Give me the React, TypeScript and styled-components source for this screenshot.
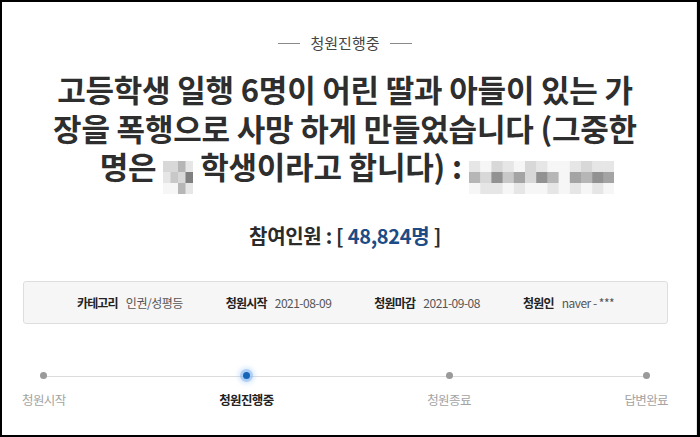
import React from "react";
import styled, { createGlobalStyle } from "styled-components";

const GlobalStyle = createGlobalStyle`
  html, body { margin: 0; padding: 0; background: #fff; }
  body { font-family: "Noto Sans CJK KR", "Noto Sans", sans-serif; }
`;

const Frame = styled.div`
  width: 700px;
  height: 437px;
  box-sizing: border-box;
  border-style: solid;
  border-color: #000;
  border-width: 2px 3px 2px 2px;
  background: #fff;
  overflow: hidden;
`;

const Inner = styled.div`
  height: 100%;
  box-sizing: border-box;
  border-right: 1px solid #e6e6e6;
  padding: 31px 0 0 20px;
`;

const Content = styled.div`
  width: 646px;
  display: flex;
  flex-direction: column;
  align-items: center;
`;

const Status = styled.div`
  display: flex;
  align-items: center;
  gap: 10px;
  font-size: 15px;
  line-height: 20px;
  color: #444;
  &::before, &::after {
    content: "";
    width: 22px;
    height: 1px;
    background: #8a8a8a;
  }
`;

const Title = styled.h1`
  margin: 17px 0 0;
  font-size: 31px;
  font-weight: 700;
  color: #2e2e2e;
  text-align: center;
  letter-spacing: -0.2px;
`;

const TitleLine = styled.span<{ $shift?: number }>`
  display: block;
  height: 38.5px;
  line-height: 38.5px;
  white-space: nowrap;
  padding-left: ${(p) => p.$shift ?? 0}px;
`;

const MosaicSvg = styled.svg`
  display: inline-block;
  vertical-align: -15px;
`;

const Count = styled.div`
  margin-top: 37px;
  font-size: 20px;
  line-height: 26px;
  font-weight: 700;
  color: #2b2b2b;
  letter-spacing: -0.3px;
`;

const Num = styled.span`
  color: #1c4b86;
`;

const InfoBox = styled.div`
  margin-top: 32px;
  align-self: stretch;
  margin-left: 1px;
  height: 43px;
  box-sizing: border-box;
  border: 1px solid #dedede;
  border-radius: 3px;
  background: #f6f6f6;
  display: flex;
  justify-content: center;
  align-items: center;
  gap: 43px;
`;

const InfoItem = styled.div`
  display: flex;
  align-items: center;
  gap: 8px;
  font-size: 12px;
`;

const InfoLabel = styled.span`
  font-weight: 700;
  color: #222;
  letter-spacing: -0.8px;
`;

const InfoValue = styled.span`
  color: #555;
  letter-spacing: -0.5px;
`;

const Steps = styled.div`
  margin-top: 44px;
  align-self: stretch;
  position: relative;
  display: flex;
  justify-content: space-between;
  &::before {
    content: "";
    position: absolute;
    left: 21px;
    right: 20px;
    top: 8px;
    height: 1px;
    background: #dcdcdc;
  }
`;

const Step = styled.div`
  position: relative;
  display: flex;
  flex-direction: column;
  align-items: center;
  gap: 8px;
`;

const DotWrap = styled.div`
  height: 16px;
  display: flex;
  align-items: center;
  justify-content: center;
`;

const Dot = styled.span<{ $active?: boolean }>`
  width: 7px;
  height: 7px;
  border-radius: 50%;
  background: ${(p) => (p.$active ? "#1464b8" : "#9a9a9a")};
  box-shadow: ${(p) =>
    p.$active ? "0 0 0 3px rgba(120,170,235,0.45), 0 0 4px 5px rgba(150,195,245,0.35)" : "none"};
`;

const StepLabel = styled.span<{ $active?: boolean }>`
  font-size: 12.5px;
  line-height: 16px;
  letter-spacing: -0.6px;
  color: ${(p) => (p.$active ? "#222" : "#a3a3a3")};
  font-weight: ${(p) => (p.$active ? 700 : 400)};
`;

const greys = ["#5e5e5e", "#6e6e6e", "#808080", "#929292", "#a4a4a4", "#b6b6b6", "#c8c8c8", "#d8d8d8", "#e6e6e6", "#f6f6f6"];

function Mosaic({ rows, cw, ch }: { rows: string[]; cw: number; ch: number }) {
  const cols = rows[0].length;
  const w = cols * cw;
  const h = rows.length * ch;
  return (
    <MosaicSvg width={w} height={h} viewBox={`0 0 ${w} ${h}`} aria-hidden="true">
      {rows.map((r, y) =>
        r.split("").map((d, x) => (
          <rect key={`${x}-${y}`} x={x * cw} y={y * ch} width={cw + 0.5} height={ch + 0.5} fill={greys[Number(d)]} />
        ))
      )}
    </MosaicSvg>
  );
}

const steps = [
  { label: "청원시작", active: false },
  { label: "청원진행중", active: true },
  { label: "청원종료", active: false },
  { label: "답변완료", active: false },
];

const info = [
  { label: "카테고리", value: "인권/성평등" },
  { label: "청원시작", value: "2021-08-09" },
  { label: "청원마감", value: "2021-09-08" },
  { label: "청원인", value: "naver - ***" },
];

export default function App() {
  return (
    <>
      <GlobalStyle />
      <Frame>
        <Inner>
          <Content>
            <Status>청원진행중</Status>
            <Title>
              <TitleLine>고등학생 일행 6명이 어린 딸과 아들이 있는 가</TitleLine>
              <TitleLine>장을 폭행으로 사망 하게 만들었습니다 (그중한</TitleLine>
              <TitleLine $shift={24}>
                명은{" "}
                <Mosaic rows={["7758", "8672", "9958"]} cw={7.5} ch={11} />{" "}
                학생이라고 합니다) :{" "}
                <Mosaic
                  rows={["8978978998788", "5736473594534", "9889899898989"]}
                  cw={11.2}
                  ch={11}
                />
              </TitleLine>
            </Title>
            <Count>
              참여인원 : [ <Num>48,824명</Num> ]
            </Count>
            <InfoBox>
              {info.map((i) => (
                <InfoItem key={i.label}>
                  <InfoLabel>{i.label}</InfoLabel>
                  <InfoValue>{i.value}</InfoValue>
                </InfoItem>
              ))}
            </InfoBox>
            <Steps>
              {steps.map((s) => (
                <Step key={s.label}>
                  <DotWrap>
                    <Dot $active={s.active} />
                  </DotWrap>
                  <StepLabel $active={s.active}>{s.label}</StepLabel>
                </Step>
              ))}
            </Steps>
          </Content>
        </Inner>
      </Frame>
    </>
  );
}
